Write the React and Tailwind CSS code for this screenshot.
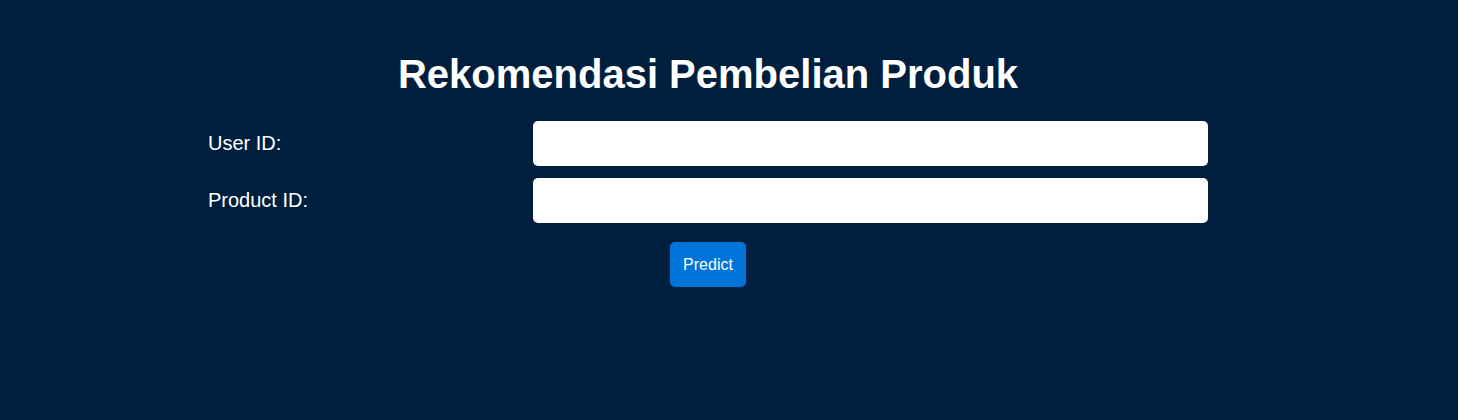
export default function App() {
  return (
    <div
      className="min-h-screen bg-[#001f3f] pt-[51px] text-white"
      style={{ fontFamily: '"Liberation Sans", Arial, sans-serif' }}
    >
      <div className="ml-[208px] w-[1000px]">
        <h1 className="text-center text-[40px] font-bold leading-[46px]">
          Rekomendasi Pembelian Produk
        </h1>
        <div className="mt-[24px] flex flex-col gap-[12px]">
          <div className="flex items-center">
            <label className="w-[325px] text-[20px] leading-[23px]">User ID:</label>
            <input type="text" className="h-[45px] w-[675px] rounded-[5px] bg-white text-black outline-none" />
          </div>
          <div className="flex items-center">
            <label className="w-[325px] text-[20px] leading-[23px]">Product ID:</label>
            <input type="text" className="h-[45px] w-[675px] rounded-[5px] bg-white text-black outline-none" />
          </div>
        </div>
        <div className="mt-[19px] flex justify-center">
          <button className="h-[45px] rounded-[5px] bg-[#0074d9] px-[13px] text-[16px] text-white">
            Predict
          </button>
        </div>
      </div>
    </div>
  );
}
